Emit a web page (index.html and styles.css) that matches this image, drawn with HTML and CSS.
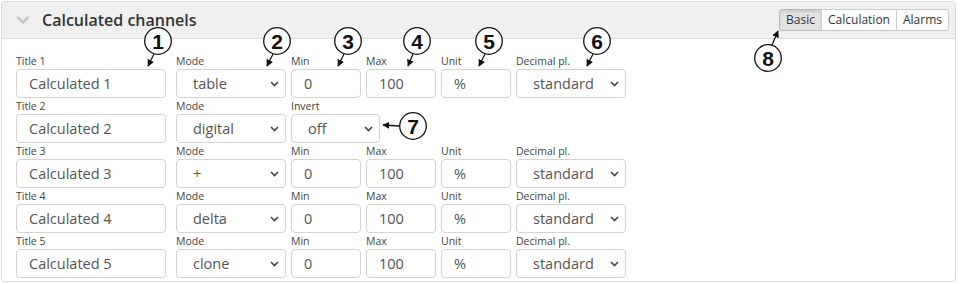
FILE: index.html
```html
<!DOCTYPE html>
<html>
<head>
<meta charset="utf-8">
<link rel="stylesheet" href="styles.css">
</head>
<body>
<div class="panel">
  <div class="panel-head">
    <div class="head-title">
      <svg class="chev" width="14" height="9" viewBox="0 0 14 9"><path d="M0.5 1.8 L2.3 0 L7 4.6 L11.7 0 L13.5 1.8 L7 8.3 Z" fill="#c4c4c4"/></svg>
      <span>Calculated channels</span>
    </div>
    <div class="tabs">
      <button class="tab active">Basic</button><button class="tab">Calculation</button><button class="tab">Alarms</button>
    </div>
  </div>
  <div class="panel-body">
    <div class="row">
      <div class="field f-title"><label>Title 1</label><div class="ctl">Calculated 1</div></div>
      <div class="field f-sel"><label>Mode</label><div class="ctl sel">table<svg class="arr" width="9" height="6" viewBox="0 0 9 6"><path d="M1 1 L4.5 4.5 L8 1" fill="none" stroke="#444" stroke-width="1.6"/></svg></div></div>
      <div class="field f-num"><label>Min</label><div class="ctl">0</div></div>
      <div class="field f-num"><label>Max</label><div class="ctl">100</div></div>
      <div class="field f-num"><label>Unit</label><div class="ctl">%</div></div>
      <div class="field f-sel"><label>Decimal pl.</label><div class="ctl sel">standard<svg class="arr" width="9" height="6" viewBox="0 0 9 6"><path d="M1 1 L4.5 4.5 L8 1" fill="none" stroke="#444" stroke-width="1.6"/></svg></div></div>
    </div>
    <div class="row">
      <div class="field f-title"><label>Title 2</label><div class="ctl">Calculated 2</div></div>
      <div class="field f-sel"><label>Mode</label><div class="ctl sel">digital<svg class="arr" width="9" height="6" viewBox="0 0 9 6"><path d="M1 1 L4.5 4.5 L8 1" fill="none" stroke="#444" stroke-width="1.6"/></svg></div></div>
      <div class="field f-inv"><label>Invert</label><div class="ctl sel">off<svg class="arr" width="9" height="6" viewBox="0 0 9 6"><path d="M1 1 L4.5 4.5 L8 1" fill="none" stroke="#444" stroke-width="1.6"/></svg></div></div>
    </div>
    <div class="row">
      <div class="field f-title"><label>Title 3</label><div class="ctl">Calculated 3</div></div>
      <div class="field f-sel"><label>Mode</label><div class="ctl sel">+<svg class="arr" width="9" height="6" viewBox="0 0 9 6"><path d="M1 1 L4.5 4.5 L8 1" fill="none" stroke="#444" stroke-width="1.6"/></svg></div></div>
      <div class="field f-num"><label>Min</label><div class="ctl">0</div></div>
      <div class="field f-num"><label>Max</label><div class="ctl">100</div></div>
      <div class="field f-num"><label>Unit</label><div class="ctl">%</div></div>
      <div class="field f-sel"><label>Decimal pl.</label><div class="ctl sel">standard<svg class="arr" width="9" height="6" viewBox="0 0 9 6"><path d="M1 1 L4.5 4.5 L8 1" fill="none" stroke="#444" stroke-width="1.6"/></svg></div></div>
    </div>
    <div class="row">
      <div class="field f-title"><label>Title 4</label><div class="ctl">Calculated 4</div></div>
      <div class="field f-sel"><label>Mode</label><div class="ctl sel">delta<svg class="arr" width="9" height="6" viewBox="0 0 9 6"><path d="M1 1 L4.5 4.5 L8 1" fill="none" stroke="#444" stroke-width="1.6"/></svg></div></div>
      <div class="field f-num"><label>Min</label><div class="ctl">0</div></div>
      <div class="field f-num"><label>Max</label><div class="ctl">100</div></div>
      <div class="field f-num"><label>Unit</label><div class="ctl">%</div></div>
      <div class="field f-sel"><label>Decimal pl.</label><div class="ctl sel">standard<svg class="arr" width="9" height="6" viewBox="0 0 9 6"><path d="M1 1 L4.5 4.5 L8 1" fill="none" stroke="#444" stroke-width="1.6"/></svg></div></div>
    </div>
    <div class="row">
      <div class="field f-title"><label>Title 5</label><div class="ctl">Calculated 5</div></div>
      <div class="field f-sel"><label>Mode</label><div class="ctl sel">clone<svg class="arr" width="9" height="6" viewBox="0 0 9 6"><path d="M1 1 L4.5 4.5 L8 1" fill="none" stroke="#444" stroke-width="1.6"/></svg></div></div>
      <div class="field f-num"><label>Min</label><div class="ctl">0</div></div>
      <div class="field f-num"><label>Max</label><div class="ctl">100</div></div>
      <div class="field f-num"><label>Unit</label><div class="ctl">%</div></div>
      <div class="field f-sel"><label>Decimal pl.</label><div class="ctl sel">standard<svg class="arr" width="9" height="6" viewBox="0 0 9 6"><path d="M1 1 L4.5 4.5 L8 1" fill="none" stroke="#444" stroke-width="1.6"/></svg></div></div>
    </div>
  </div>
</div>
<svg class="notes" width="960" height="284" viewBox="0 0 960 284">
  <defs>
    <marker id="ah" viewBox="0 0 10 10" refX="9" refY="5" markerWidth="7" markerHeight="7" markerUnits="userSpaceOnUse" orient="auto">
      <path d="M0 0 L10 5 L0 10 Z" fill="#111"/>
    </marker>
  </defs>
  <g stroke="#111" stroke-width="1.3" fill="none" marker-end="url(#ah)">
    <line x1="154" y1="54" x2="148" y2="66"/>
    <line x1="273" y1="54" x2="267" y2="66"/>
    <line x1="344" y1="54" x2="338" y2="66"/>
    <line x1="413" y1="54" x2="408" y2="66"/>
    <line x1="485" y1="54" x2="479" y2="66"/>
    <line x1="593" y1="54" x2="587" y2="66"/>
    <line x1="399" y1="126" x2="383" y2="125"/>
    <line x1="772" y1="45" x2="778" y2="31"/>
  </g>
  <g fill="#fff" stroke="#111" stroke-width="1.3">
    <circle cx="158" cy="41" r="13.3"/>
    <circle cx="277" cy="41" r="13.3"/>
    <circle cx="348" cy="41" r="13.3"/>
    <circle cx="417" cy="41" r="13.3"/>
    <circle cx="489" cy="41" r="13.3"/>
    <circle cx="597" cy="41" r="13.3"/>
    <circle cx="413" cy="126" r="13.3"/>
    <circle cx="768" cy="58" r="13.3"/>
  </g>
  <g class="num" text-anchor="middle">
    <text x="158" y="48.5">1</text>
    <text x="277" y="48.5">2</text>
    <text x="348" y="48.5">3</text>
    <text x="417" y="48.5">4</text>
    <text x="489" y="48.5">5</text>
    <text x="597" y="48.5">6</text>
    <text x="413" y="133.5">7</text>
    <text x="768" y="65.5">8</text>
  </g>
</svg>
</body>
</html>
```
FILE: styles.css
```css
html, body {
  margin: 0;
  padding: 0;
  background: #fff;
}
body {
  font-family: "Open Sans", "Liberation Sans", sans-serif;
  position: relative;
  width: 960px;
  height: 284px;
  overflow: hidden;
}
.panel {
  margin: 1px 4px 0 1px;
  border: 1px solid #dcdcdc;
  border-radius: 3px;
  background: #fff;
}
.panel-head {
  height: 36px;
  background: #f0f0f0;
  border-bottom: 1px solid #dcdcdc;
  display: flex;
  align-items: center;
  justify-content: space-between;
  padding: 0 6px 0 14px;
}
.head-title {
  display: flex;
  align-items: center;
  gap: 12px;
  font-size: 16px;
  font-weight: 600;
  color: #333;
}
.chev {
  display: block;
  margin-top: 1px;
}
.tabs {
  display: flex;
}
.tab {
  font-family: "Open Sans", "Liberation Sans", sans-serif;
  font-size: 12px;
  color: #333;
  background: #fff;
  border: 1px solid #ccc;
  margin: 0 0 0 -1px;
  height: 22px;
  padding: 0 6px;
  line-height: 20px;
}
.tab:first-child {
  border-radius: 3px 0 0 3px;
  margin-left: 0;
}
.tab:last-child {
  border-radius: 0 3px 3px 0;
}
.tab.active {
  background: #e3e3e3;
  box-shadow: inset 0 2px 3px rgba(0,0,0,0.12);
  border-color: #bbb;
}
.panel-body {
  padding: 14px 14px 3px 14px;
}
.row {
  display: flex;
  gap: 5px;
}
.field {
  display: flex;
  flex-direction: column;
}
.field label {
  font-size: 10.5px;
  line-height: 16px;
  height: 16px;
  color: #444;
}
.ctl {
  position: relative;
  box-sizing: border-box;
  height: 29px;
  border: 1px solid #d4d4d4;
  border-radius: 4px;
  background: #fff;
  font-size: 14.5px;
  line-height: 27px;
  color: #555;
  padding: 0 12px;
  white-space: nowrap;
}
.ctl.sel {
  padding-left: 16px;
}
.arr {
  position: absolute;
  right: 6px;
  top: 11px;
}
.f-title { width: 150px; margin-right: 5px; }
.f-sel { width: 110px; }
.f-num { width: 70px; }
.f-inv { width: 89px; }
.notes {
  position: absolute;
  left: 0;
  top: 0;
  pointer-events: none;
}
.num text {
  font-family: "Liberation Sans", Arial, sans-serif;
  font-weight: bold;
  font-size: 21px;
  fill: #111;
}
```
